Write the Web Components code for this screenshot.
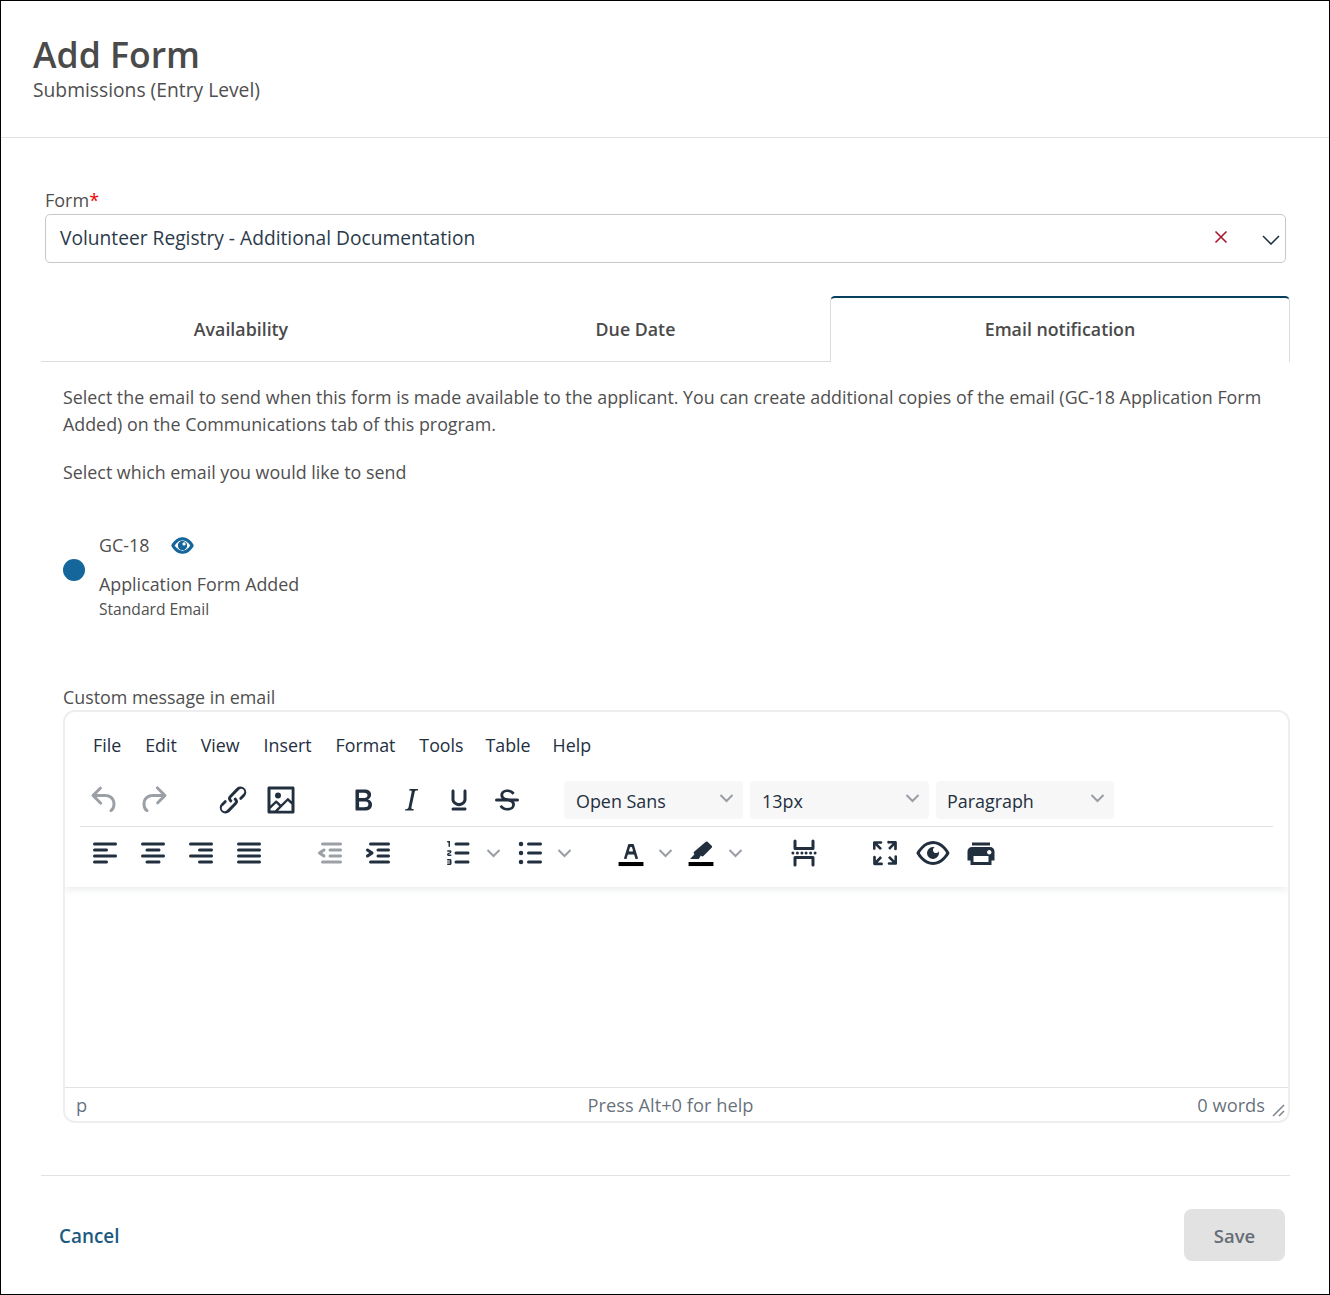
<!DOCTYPE html>
<html>
<head>
<meta charset="utf-8">
<title>Add Form</title>
<style>
    html, body { margin: 0; padding: 0; background: #fff; }
    body { font-family: "Open Sans", "Noto Sans", sans-serif; color: #4a4a4a; }
</style>
</head>
<body>
<add-form-dialog>
    <dialog-header slot="header" heading="Add Form" sub="Submissions (Entry Level)"></dialog-header>
    <form-select label="Form" value="Volunteer Registry - Additional Documentation"></form-select>
    <tab-row>
        <tab-item w="400">Availability</tab-item>
        <tab-item w="389">Due Date</tab-item>
        <tab-item w="460" active>Email notification</tab-item>
    </tab-row>
    <email-panel></email-panel>
    <rich-editor></rich-editor>
    <dialog-footer></dialog-footer>
</add-form-dialog>

<script>
const ICONS = {
    undo: '<path d="M6.4 8H12c3.7 0 6.2 2 6.8 5.1.6 2.7-.4 5.6-2.3 6.8a1 1 0 0 1-1-1.8c1.1-.6 1.8-2.7 1.4-4.6-.5-2.1-2.1-3.5-4.9-3.5H6.4l3.3 3.3a1 1 0 1 1-1.4 1.4l-5-5a1 1 0 0 1 0-1.4l5-5a1 1 0 0 1 1.4 1.4L6.4 8z"/>',
    redo: '<path d="M17.6 10H12c-2.8 0-4.4 1.4-4.9 3.5-.4 2 .3 4 1.4 4.6a1 1 0 1 1-1 1.8c-2-1.2-2.9-4.1-2.3-6.8.6-3 3-5.1 6.8-5.1h5.6l-3.3-3.3a1 1 0 1 1 1.4-1.4l5 5a1 1 0 0 1 0 1.4l-5 5a1 1 0 0 1-1.4-1.4l3.3-3.3z"/>',
    link: '<path d="M6.2 12.3a1 1 0 0 1 1.4 1.4l-2 2a2 2 0 1 0 2.6 2.8l4.8-4.8a1 1 0 0 0 0-1.4 1 1 0 1 1 1.4-1.3 2.9 2.9 0 0 1 0 4L9.6 20a3.9 3.9 0 0 1-5.5-5.5l2-2zm11.6-.6a1 1 0 0 1-1.4-1.4l2-2a2 2 0 1 0-2.6-2.8L11 10.3a1 1 0 0 0 0 1.4A1 1 0 1 1 9.6 13a2.9 2.9 0 0 1 0-4L14.4 4a3.9 3.9 0 0 1 5.5 5.5l-2 2z"/>',
    image: '<path d="M5 15.7l3.3-3.2c.3-.3.7-.3 1 0L12 15l4.1-4c.3-.4.8-.4 1 0l2 1.9V5H5v10.7zM5 18V19h3l2.8-2.9-2-2L5 17.9zm14-3l-2.5-2.4-6.4 6.5H19v-4zM4 3h16c.6 0 1 .4 1 1v16c0 .6-.4 1-1 1H4a1 1 0 0 1-1-1V4c0-.6.4-1 1-1zm6 8a2 2 0 1 0 0-4 2 2 0 0 0 0 4z"/>',
    bold: '<path d="M7.8 19c-.3 0-.5 0-.6-.2l-.2-.5V5.7c0-.2 0-.4.2-.5l.6-.2h5c1.5 0 2.7.3 3.5 1 .7.6 1.1 1.4 1.1 2.5a3 3 0 0 1-.6 1.9c-.4.6-1 1-1.6 1.2.4.1.9.3 1.3.6s.8.7 1 1.2c.4.4.5 1 .5 1.6 0 1.3-.4 2.3-1.3 3-.8.7-2.1 1-3.8 1H7.8zm5-8.3c.6 0 1.2-.1 1.6-.5.4-.3.6-.7.6-1.3 0-1.1-.8-1.7-2.3-1.7H9.3v3.5h3.4zm.5 6c.7 0 1.3-.1 1.7-.4.4-.4.6-.9.6-1.5s-.2-1-.7-1.4c-.4-.3-1-.4-2-.4H9.4v3.8h4z"/>',
    italic: '<path d="M16.7 4.7l-.1.9h-.3c-.6 0-1 0-1.4.3-.3.3-.4.6-.5 1.1l-2.1 9.8v.6c0 .5.4.8 1.4.8h.2l-.2.8H8l.2-.8h.2c1.1 0 1.8-.5 2-1.5l2-9.8.1-.5c0-.6-.4-.8-1.4-.8h-.3l.2-.9h5.8z"/>',
    underline: '<path d="M16 5c.6 0 1 .4 1 1v5.5a4 4 0 0 1-.4 1.8l-1 1.4a5.3 5.3 0 0 1-5.5 1 5 5 0 0 1-1.6-1c-.5-.4-.8-.9-1.1-1.4a4 4 0 0 1-.4-1.8V6c0-.6.4-1 1-1s1 .4 1 1v5.5c0 .3 0 .6.2 1l.6.7a3.3 3.3 0 0 0 2.2.8 3.4 3.4 0 0 0 2.2-.8c.3-.2.4-.5.6-.8l.2-.9V6c0-.6.4-1 1-1zM8 17h8c.6 0 1 .4 1 1s-.4 1-1 1H8a1 1 0 0 1 0-2z"/>',
    strike: '<path d="M15.6 8.5c-.5-.7-1-1.1-1.3-1.3-.6-.4-1.3-.6-2-.6-2.7 0-2.8 1.7-2.8 2.1 0 1.6 1.8 2 3.2 2.3 4.4.9 4.6 2.8 4.6 3.9 0 1.4-.7 4.1-5 4.1A6.2 6.2 0 0 1 7 16.4l1.5-1.1c.4.6 1.6 2 3.7 2 1.6 0 2.5-.4 3-1.2.4-.8.3-2-.8-2.6-.7-.4-1.6-.7-2.9-1-1-.2-3.9-.8-3.9-3.6C7.6 6 10.3 5 12.4 5c2.9 0 4.2 1.6 4.7 2.4l-1.5 1.1z"/><path d="M5 11h14a1 1 0 0 1 0 2H5a1 1 0 0 1 0-2z"/>',
    left: '<path d="M5 5h14c.6 0 1 .4 1 1s-.4 1-1 1H5a1 1 0 1 1 0-2zm0 4h8c.6 0 1 .4 1 1s-.4 1-1 1H5a1 1 0 1 1 0-2zm0 8h8c.6 0 1 .4 1 1s-.4 1-1 1H5a1 1 0 0 1 0-2zm0-4h14c.6 0 1 .4 1 1s-.4 1-1 1H5a1 1 0 0 1 0-2z"/>',
    center: '<path d="M5 5h14c.6 0 1 .4 1 1s-.4 1-1 1H5a1 1 0 1 1 0-2zm3 4h8c.6 0 1 .4 1 1s-.4 1-1 1H8a1 1 0 1 1 0-2zm0 8h8c.6 0 1 .4 1 1s-.4 1-1 1H8a1 1 0 0 1 0-2zm-3-4h14c.6 0 1 .4 1 1s-.4 1-1 1H5a1 1 0 0 1 0-2z"/>',
    right: '<path d="M5 5h14c.6 0 1 .4 1 1s-.4 1-1 1H5a1 1 0 1 1 0-2zm6 4h8c.6 0 1 .4 1 1s-.4 1-1 1h-8a1 1 0 0 1 0-2zm0 8h8c.6 0 1 .4 1 1s-.4 1-1 1h-8a1 1 0 0 1 0-2zm-6-4h14c.6 0 1 .4 1 1s-.4 1-1 1H5a1 1 0 0 1 0-2z"/>',
    justify: '<path d="M5 5h14c.6 0 1 .4 1 1s-.4 1-1 1H5a1 1 0 1 1 0-2zm0 4h14c.6 0 1 .4 1 1s-.4 1-1 1H5a1 1 0 1 1 0-2zm0 4h14c.6 0 1 .4 1 1s-.4 1-1 1H5a1 1 0 0 1 0-2zm0 4h14c.6 0 1 .4 1 1s-.4 1-1 1H5a1 1 0 0 1 0-2z"/>',
    outdent: '<path d="M7 5h12c.6 0 1 .4 1 1s-.4 1-1 1H7a1 1 0 1 1 0-2zm5 4h7c.6 0 1 .4 1 1s-.4 1-1 1h-7a1 1 0 0 1 0-2zm0 4h7c.6 0 1 .4 1 1s-.4 1-1 1h-7a1 1 0 0 1 0-2zm-5 4h12a1 1 0 0 1 0 2H7a1 1 0 0 1 0-2zm1.6-3.8a1 1 0 0 1-1.2 1.6l-3-2a1 1 0 0 1 0-1.6l3-2a1 1 0 0 1 1.2 1.6L6.8 12l1.8 1.2z"/>',
    indent: '<path d="M7 5h12c.6 0 1 .4 1 1s-.4 1-1 1H7a1 1 0 1 1 0-2zm5 4h7c.6 0 1 .4 1 1s-.4 1-1 1h-7a1 1 0 0 1 0-2zm0 4h7c.6 0 1 .4 1 1s-.4 1-1 1h-7a1 1 0 0 1 0-2zm-5 4h12a1 1 0 0 1 0 2H7a1 1 0 0 1 0-2zm-2.6-3.8L6.2 12l-1.8-1.2a1 1 0 0 1 1.2-1.6l3 2a1 1 0 0 1 0 1.6l-3 2a1 1 0 1 1-1.2-1.6z"/>',
    numlist: '<path d="M10 17h8c.6 0 1 .4 1 1s-.4 1-1 1h-8a1 1 0 0 1 0-2zm0-6h8c.6 0 1 .4 1 1s-.4 1-1 1h-8a1 1 0 0 1 0-2zm0-6h8c.6 0 1 .4 1 1s-.4 1-1 1h-8a1 1 0 1 1 0-2zM6 4v3.5c0 .3-.2.5-.5.5a.5.5 0 0 1-.5-.5V5h-.5a.5.5 0 0 1 0-1H6zm-1 8.8l.2.2h1.3c.3 0 .5.2.5.5s-.2.5-.5.5H4.9a1 1 0 0 1-.9-1V13c0-.4.3-.8.6-1l1.2-.4.2-.3a.2.2 0 0 0-.2-.2H4.5a.5.5 0 0 1-.5-.5c0-.3.2-.5.5-.5h1.6c.5 0 .9.4.9 1v.1c0 .4-.3.8-.6 1l-1.2.4-.2.3zM7 17v2c0 .6-.4 1-1 1H4.5a.5.5 0 0 1 0-1h1.2c.2 0 .3-.1.3-.3 0-.2-.1-.3-.3-.3H4.4a.4.4 0 1 1 0-.8h1.3c.2 0 .3-.1.3-.3 0-.2-.1-.3-.3-.3H4.500a.5.5 0 1 1 0-1H6c.6 0 1 .4 1 1z"/>',
    bullist: '<path d="M11 5h8c.6 0 1 .4 1 1s-.4 1-1 1h-8a1 1 0 0 1 0-2zm0 6h8c.6 0 1 .4 1 1s-.4 1-1 1h-8a1 1 0 0 1 0-2zm0 6h8c.6 0 1 .4 1 1s-.4 1-1 1h-8a1 1 0 0 1 0-2z"/><circle cx="6" cy="6" r="1.5"/><circle cx="6" cy="12" r="1.5"/><circle cx="6" cy="18" r="1.5"/>',
    textcolor: '<path d="M8.7 16h-.8a.5.5 0 0 1-.5-.6l2.7-9c.1-.3.3-.4.5-.4h2.8c.2 0 .4.1.5.4l2.7 9a.5.5 0 0 1-.5.6h-.8a.5.5 0 0 1-.4-.4l-.7-2.2c0-.3-.3-.4-.5-.4h-3.4c-.2 0-.4.1-.5.4l-.7 2.2c0 .3-.2.4-.4.4zm2.6-7.6l-.6 2a.5.5 0 0 0 .5.6h1.6a.5.5 0 0 0 .5-.6l-.6-2c0-.3-.3-.4-.5-.4h-.4c-.2 0-.4.1-.5.4z"/><path fill="#000" d="M3.7 18h16.6v2.7H3.7z"/>',
    highlight: '<path d="M15 4.7c.4-.5 1.1-.5 1.5-.1l2.6 2.5c.4.4.4 1 0 1.4L13.6 14c-.4.4-1 .4-1.4 0l-.3-.3-1.4 2.3H4.7l3-3.2-.3-.3c-.4-.4-.4-1 0-1.4z"/><path fill="#000" d="M3.7 18h16.6v2.7H3.7z"/>',
    pagebreak: '<path d="M4.6 11a1 1 0 1 1 0 2 1 1 0 0 1 0-2zm3 0a1 1 0 1 1 0 2 1 1 0 0 1 0-2zm3 0a1 1 0 1 1 0 2 1 1 0 0 1 0-2zm2.800 0a1 1 0 1 1 0 2 1 1 0 0 1 0-2zm3 0a1 1 0 1 1 0 2 1 1 0 0 1 0-2zm3 0a1 1 0 1 1 0 2 1 1 0 0 1 0-2z"/><path d="M6 3a1 1 0 0 1 1 1v4h10V4a1 1 0 0 1 2 0v5a1 1 0 0 1-1 1H6a1 1 0 0 1-1-1V4a1 1 0 0 1 1-1zM6 21a1 1 0 0 1-1-1v-5a1 1 0 0 1 1-1h12a1 1 0 0 1 1 1v5a1 1 0 0 1-2 0v-4H7v4a1 1 0 0 1-1 1z"/>',
    fullscreen: '<path d="M15.3 10l-1.2-1.3 2.9-3h-2.3a.9.9 0 1 1 0-1.7H19c.5 0 .9.4.9.9v4.4a.9.9 0 1 1-1.8 0V7l-2.9 3zm0 4l3 3v-2.3a.9.9 0 1 1 1.7 0V19c0 .5-.4.9-.9.9h-4.4a.9.9 0 1 1 0-1.8H17l-3-2.9 1.3-1.2zM10 15.4l-2.9 3h2.3a.9.9 0 1 1 0 1.7H5a.9.9 0 0 1-.9-.9v-4.4a.9.9 0 1 1 1.8 0V17l2.9-3 1.2 1.3zM8.7 10L5.7 7v2.3a.9.9 0 0 1-1.7 0V5c0-.5.4-.9.9-.9h4.4a.9.9 0 0 1 0 1.8H7l3 2.9-1.3 1.2z"/>',
    preview: '<path d="M3.5 12.5c.5.8 1.1 1.6 1.8 2.3 2 2 4.2 3.2 6.7 3.2s4.7-1.2 6.7-3.2a16.2 16.2 0 0 0 2.1-2.8 15.7 15.7 0 0 0-2.1-2.8c-2-2-4.2-3.2-6.7-3.2a9.3 9.3 0 0 0-6.7 3.2A16.2 16.2 0 0 0 3.2 12c0 .2.2.3.3.5zm-2.4-1l.7-1.2L4 7.8C6.2 5.4 8.9 4 12 4c3 0 5.8 1.4 8.1 3.8a18.2 18.2 0 0 1 2.8 3.7v1l-.7 1.2-2.1 2.5c-2.3 2.4-5 3.8-8.1 3.8-3 0-5.8-1.4-8.1-3.8a18.2 18.2 0 0 1-2.8-3.7 1 1 0 0 1 0-1zm12-3.3a2 2 0 1 0 2.7 2.6 4 4 0 1 1-2.6-2.6z"/>',
    print: '<path d="M18 8H6a3 3 0 0 0-3 3v6h2v3h14v-3h2v-6a3 3 0 0 0-3-3zm-1 10H7v-4h10v4zm.5-5c-.8 0-1.5-.7-1.5-1.5s.7-1.5 1.5-1.5 1.5.7 1.5 1.5-.7 1.5-1.5 1.5zm.5-8H6v2h12V5z"/>'
};

class AddFormDialog extends HTMLElement {
    constructor() {
        super();
        this.attachShadow({mode: "open"});
    }
    connectedCallback() {
        this.shadowRoot.innerHTML = `
        <style>
            :host { display: block; box-sizing: border-box; width: 1330px; height: 1295px; border: 1px solid #000; background: #fff;
                font-family: "Open Sans", "Noto Sans", sans-serif; color: #4a4a4a; overflow: hidden; }
            main { padding: 0 39px 0 40px; display: flex; flex-direction: column; }
        </style>
        <slot name="header"></slot>
        <main><slot></slot></main>`;
    }
}

class DialogHeader extends HTMLElement {
    constructor() {
        super();
        this.attachShadow({mode: "open"});
    }
    connectedCallback() {
        this.shadowRoot.innerHTML = `
        <style>
            :host { display: block; box-sizing: border-box; height: 137px; padding: 31px 32px 0; border-bottom: 1px solid #e2e2e2; }
            h1 { margin: 0; font-size: 35.6px; line-height: 44px; font-weight: 600; color: #4a4a4a; }
            p { margin: 1px 0 0; font-size: 19.25px; line-height: 26px; color: #4f4f4f; }
        </style>
        <h1>${this.getAttribute('heading')}</h1>
        <p>${this.getAttribute('sub')}</p>`;
    }
}

class FormSelect extends HTMLElement {
    constructor() {
        super();
        this.attachShadow({mode: "open"});
    }
    connectedCallback() {
        this.shadowRoot.innerHTML = `
        <style>
            :host { display: block; padding: 50px 4px 0; }
            label { display: block; font-size: 18px; line-height: 24px; margin-bottom: 2px; color: #4f4f4f; }
            label span { color: #e00; }
            .box { box-sizing: border-box; height: 49px; border: 1px solid #c8c8c8; border-radius: 5px; display: flex; align-items: center;
                padding: 0 3px 0 14px; font-size: 19.2px; color: #2b3a4a; }
            .val { flex: 1; margin-top: -2px; }
            .x { width: 14px; height: 14px; margin: -3px 34px 0 0; }
            .arrow { width: 18px; height: 10px; margin: 2px 2px 0 0; }
        </style>
        <label>${this.getAttribute('label')}<span>*</span></label>
        <div class="box">
            <span class="val">${this.getAttribute('value')}</span>
            <svg class="x" viewBox="0 0 14 14"><path d="M1.500 1.500l11 11M12.500 1.500l-11 11" stroke="#a8172a" stroke-width="1.600" fill="none"/></svg>
            <svg class="arrow" viewBox="0 0 18 10"><path d="M1 1l8 8 8-8" stroke="#1f3345" stroke-width="1.600" fill="none"/></svg>
        </div>`;
    }
}

class TabRow extends HTMLElement {
    constructor() {
        super();
        this.attachShadow({mode: "open"});
    }
    connectedCallback() {
        this.shadowRoot.innerHTML = `
        <style>
            :host { display: flex; margin-top: 33px; }
        </style>
        <slot></slot>`;
    }
}

class TabItem extends HTMLElement {
    constructor() {
        super();
        this.attachShadow({mode: "open"});
    }
    connectedCallback() {
        this.style.width = this.getAttribute('w') + 'px';
        this.shadowRoot.innerHTML = `
        <style>
            :host { display: flex; box-sizing: border-box; height: 66px; align-items: center; justify-content: center; padding-top: 1px;
                font-size: 17.8px; font-weight: 600; color: #4a4a4a; border-bottom: 1px solid #dcdcdc; }
            :host([active]) { border-bottom: none; border-top: 2px solid #063f5f; border-left: 1px solid #dcdcdc; border-right: 1px solid #dcdcdc;
                border-radius: 5px 5px 0 0; padding-top: 0; padding-bottom: 3px; }
        </style>
        <slot></slot>`;
    }
}

class EmailPanel extends HTMLElement {
    constructor() {
        super();
        this.attachShadow({mode: "open"});
    }
    connectedCallback() {
        this.shadowRoot.innerHTML = `
        <style>
            :host { display: block; padding: 22px 22px 0; font-size: 17.85px; line-height: 27px; color: #4f4f4f; }
            p { margin: 0; }
            .sel { margin-top: 21px; }
            .opt { display: flex; align-items: flex-start; margin-top: 46px; }
            .dot { width: 22px; height: 22px; border-radius: 50%; background: #14669b; margin: 27px 14px 0 0; }
            .code { display: flex; align-items: center; gap: 22px; height: 27px; }
            .code svg { width: 23px; height: 23px; fill: #14669b; stroke: #14669b; stroke-width: 1.3; }
            .code svg .hi { fill: #fff; stroke: none; }
            .name { margin-top: 12px; }
            .type { font-size: 15.6px; line-height: 23px; }
            .cm { margin-top: 63px; line-height: 26px; }
        </style>
        <p>Select the email to send when this form is made available to the applicant. You can create additional copies of the email (GC-18 Application Form Added) on the Communications tab of this program.</p>
        <p class="sel">Select which email you would like to send</p>
        <div class="opt">
            <div class="dot"></div>
            <div>
                <div class="code"><span>GC-18</span><svg viewBox="0 0 24 24">${ICONS.preview}<circle cx="12" cy="12" r="4"/><circle class="hi" cx="13.6" cy="10.4" r="1.7"/></svg></div>
                <div class="name">Application Form Added</div>
                <div class="type">Standard Email</div>
            </div>
        </div>
        <div class="cm">Custom message in email</div>`;
    }
}

class ToolIcon extends HTMLElement {
    constructor() {
        super();
        this.attachShadow({mode: "open"});
    }
    connectedCallback() {
        this.shadowRoot.innerHTML = `
        <style>
            :host { display: flex; width: 48px; height: 36px; align-items: center; justify-content: center; flex: none; }
            svg { width: 36px; height: 36px; fill: #222f3e; display: block; }
            :host([off]) svg { fill: #9ba0a6; }
        </style>
        <svg viewBox="0 0 24 24">${ICONS[this.getAttribute('name')]}</svg>`;
    }
}

class ToolChevron extends HTMLElement {
    constructor() {
        super();
        this.attachShadow({mode: "open"});
    }
    connectedCallback() {
        this.shadowRoot.innerHTML = `
        <style>
            :host { display: flex; width: 20px; height: 36px; align-items: center; justify-content: center; flex: none; }
            svg { width: 15px; height: 9px; display: block; }
        </style>
        <svg viewBox="0 0 15 9"><path d="M1.500 1l6 6 6-6" fill="none" stroke="#999ea5" stroke-width="2"/></svg>`;
    }
}

class ToolSelect extends HTMLElement {
    constructor() {
        super();
        this.attachShadow({mode: "open"});
    }
    connectedCallback() {
        this.shadowRoot.innerHTML = `
        <style>
            :host { display: flex; box-sizing: border-box; width: 179px; height: 38px; padding: 1px 9px 0 12px; align-items: center; justify-content: space-between;
                background: #f7f7f7; border-radius: 4px; font-size: 17.9px; color: #222f3e; flex: none; }
            :host(:last-child) { width: 178px; padding-left: 11px; }
            svg { width: 15px; height: 9px; margin-top: -4px; }
        </style>
        <span><slot></slot></span>
        <svg viewBox="0 0 15 9"><path d="M1.500 1l6 6 6-6" fill="none" stroke="#999ea5" stroke-width="2"/></svg>`;
    }
}

class RichEditor extends HTMLElement {
    constructor() {
        super();
        this.attachShadow({mode: "open"});
    }
    connectedCallback() {
        this.shadowRoot.innerHTML = `
        <style>
            :host { display: flex; flex-direction: column; box-sizing: border-box; height: 413px; margin: 0 0 0 22px; border: 2px solid #eee; border-radius: 12px;
                color: #222f3e; overflow: hidden; }
            .head { height: 175px; flex: none; box-shadow: 0 2px 8px rgba(34,47,62,.1); position: relative; }
            .menu { display: flex; gap: 24px; height: 62px; padding: 20px 0 0 28px; box-sizing: border-box; font-size: 17.8px; line-height: 26px; }
            .menu .tight { margin-right: -2px; }
            .row { display: flex; align-items: center; gap: 33px; margin: 0 15px; height: 52px; padding-left: 1px; }
            .row1 { height: 53px; border-bottom: 1px solid #e2e2e2; box-sizing: border-box; }
            .grp { display: flex; align-items: center; }
            .grp.sel { gap: 7px; }
            .row1 .links { margin-left: -1px; }
            .row1 .marks { margin-left: 1px; }
            .row2 .pb { margin-left: 2px; }
            .edit { flex: 1; }
            .status { position: relative; flex: none; height: 33px; border-top: 1px solid #e2e2e2; display: flex; align-items: center; justify-content: space-between;
                padding: 0 23px 0 11px; font-size: 18.3px; color: rgba(34,47,62,.7); }
            .status .help { position: absolute; left: 0; right: 12px; text-align: center; }
            .grip { position: absolute; right: 3px; bottom: 4px; width: 13px; height: 13px; }
        </style>
        <div class="head">
            <div class="menu"><span>File</span><span>Edit</span><span>View</span><span>Insert</span><span>Format</span><span class="tight">Tools</span><span class="tight">Table</span><span>Help</span></div>
            <div class="row row1">
                <div class="grp"><tool-icon name="undo" off></tool-icon><tool-icon name="redo" off></tool-icon></div>
                <div class="grp links"><tool-icon name="link"></tool-icon><tool-icon name="image"></tool-icon></div>
                <div class="grp marks"><tool-icon name="bold"></tool-icon><tool-icon name="italic"></tool-icon><tool-icon name="underline"></tool-icon><tool-icon name="strike"></tool-icon></div>
                <div class="grp sel"><tool-select>Open Sans</tool-select><tool-select>13px</tool-select><tool-select>Paragraph</tool-select></div>
            </div>
            <div class="row row2">
                <div class="grp"><tool-icon name="left"></tool-icon><tool-icon name="center"></tool-icon><tool-icon name="right"></tool-icon><tool-icon name="justify"></tool-icon></div>
                <div class="grp"><tool-icon name="outdent" off></tool-icon><tool-icon name="indent"></tool-icon></div>
                <div class="grp"><tool-icon name="numlist"></tool-icon><tool-chevron></tool-chevron><span style="width:3px"></span><tool-icon name="bullist"></tool-icon><tool-chevron></tool-chevron></div>
                <div class="grp"><tool-icon name="textcolor"></tool-icon><tool-chevron></tool-chevron><span style="width:2px"></span><tool-icon name="highlight"></tool-icon><tool-chevron></tool-chevron></div>
                <div class="grp pb"><tool-icon name="pagebreak"></tool-icon></div>
                <div class="grp"><tool-icon name="fullscreen"></tool-icon><tool-icon name="preview"></tool-icon><tool-icon name="print"></tool-icon></div>
            </div>
        </div>
        <div class="edit"></div>
        <div class="status">
            <span>p</span><span class="help">Press Alt+0 for help</span><span>0 words</span>
            <svg class="grip" viewBox="0 0 13 13"><path d="M1 12L12 1M7 12l5-5" stroke="#7d838b" stroke-width="1.500" fill="none"/></svg>
        </div>`;
    }
}

class DialogFooter extends HTMLElement {
    constructor() {
        super();
        this.attachShadow({mode: "open"});
    }
    connectedCallback() {
        this.shadowRoot.innerHTML = `
        <style>
            :host { display: flex; box-sizing: border-box; align-items: center; justify-content: space-between; height: 120px; margin-top: 52px; padding: 0 5px 2px 18px;
                border-top: 1px solid #e2e2e2; }
            a { font-size: 18.9px; font-weight: 600; color: #1c5a80; margin-top: 2px; }
            button { width: 101px; height: 52px; padding: 2px 0 0; border: none; border-radius: 8px; background: #e2e2e2; color: #666d78; font: 600 18.5px "Open Sans", sans-serif; }
        </style>
        <a>Cancel</a>
        <button>Save</button>`;
    }
}

customElements.define('add-form-dialog', AddFormDialog);
customElements.define('dialog-header', DialogHeader);
customElements.define('form-select', FormSelect);
customElements.define('tab-row', TabRow);
customElements.define('tab-item', TabItem);
customElements.define('email-panel', EmailPanel);
customElements.define('tool-icon', ToolIcon);
customElements.define('tool-chevron', ToolChevron);
customElements.define('tool-select', ToolSelect);
customElements.define('rich-editor', RichEditor);
customElements.define('dialog-footer', DialogFooter);
</script>
</body>
</html>
